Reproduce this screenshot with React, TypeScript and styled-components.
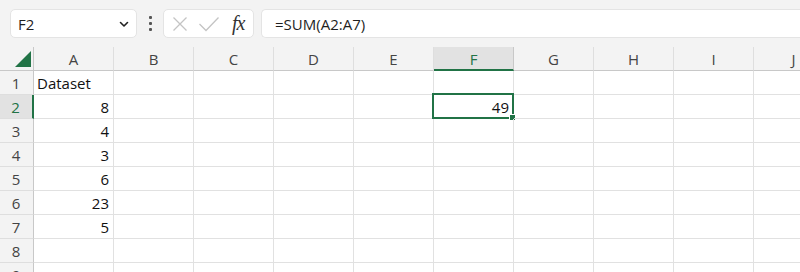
import React from "react";
import styled, { createGlobalStyle } from "styled-components";

const GlobalStyle = createGlobalStyle`
  html, body {
    margin: 0;
    padding: 0;
    background: #ffffff;
    overflow: hidden;
  }
  body {
    font-family: "Segoe UI", "Open Sans", "Noto Sans", sans-serif;
  }
`;

const GREEN = "#217346";
const COLS = ["A", "B", "C", "D", "E", "F", "G", "H", "I", "J"];
const ROWS = [1, 2, 3, 4, 5, 6, 7, 8, 9];
const DATA: Record<string, { text: string; align: "left" | "right" }> = {
  A1: { text: "Dataset", align: "left" },
  A2: { text: "8", align: "right" },
  A3: { text: "4", align: "right" },
  A4: { text: "3", align: "right" },
  A5: { text: "6", align: "right" },
  A6: { text: "23", align: "right" },
  A7: { text: "5", align: "right" },
  F2: { text: "49", align: "right" },
};
const ACTIVE_COL = "F";
const ACTIVE_ROW = 2;

const Page = styled.div`
  width: 800px;
  height: 272px;
  display: flex;
  flex-direction: column;
  background: #f3f3f3;
  overflow: hidden;
`;

const Toolbar = styled.div`
  height: 47px;
  flex: none;
  box-sizing: border-box;
  padding: 9px 0 9px 10px;
  display: flex;
  align-items: stretch;
`;

const Field = styled.div<{ $width?: number; $grow?: boolean }>`
  box-sizing: border-box;
  height: 29px;
  width: ${(p) => (p.$width ? `${p.$width}px` : "auto")};
  flex: ${(p) => (p.$grow ? "1" : "none")};
  background: #ffffff;
  border: 1px solid #e4e4e4;
  border-radius: 5px;
  display: flex;
  align-items: center;
  font-size: 15px;
  color: #1f1f1f;
`;

const NameBox = styled(Field)`
  padding: 0 6px 0 7px;
  justify-content: space-between;
`;

const FuncBox = styled(Field)`
  padding: 0 5px 0 8px;
  gap: 10px;
`;

const FormulaBox = styled(Field)`
  padding-left: 13px;
  border-radius: 5px 0 0 5px;
  border-right: none;
`;

const Kebab = styled.div`
  width: 26px;
  display: flex;
  flex-direction: column;
  align-items: center;
  justify-content: center;
  gap: 3px;
  span {
    width: 3px;
    height: 3px;
    border-radius: 1px;
    background: #555;
  }
`;

const Spacer = styled.div<{ $w: number }>`
  width: ${(p) => p.$w}px;
  flex: none;
`;

const Fx = styled.span`
  font-family: "Liberation Serif", "DejaVu Serif", serif;
  font-style: italic;
  font-size: 20px;
  color: #333;
  margin-left: 2px;
  letter-spacing: -1px;
`;

const Grid = styled.div`
  display: grid;
  grid-template-columns: 34px repeat(10, 80px);
  grid-template-rows: 24px repeat(9, 24px);
  background: #ffffff;
`;

const Corner = styled.div`
  background: #f3f3f3;
  border-right: 1px solid #c8c8c8;
  border-bottom: 1px solid #c8c8c8;
  box-sizing: border-box;
  display: flex;
  align-items: flex-end;
  justify-content: flex-end;
  padding: 0 2px 3px 0;
`;

const ColHead = styled.div<{ $active?: boolean }>`
  box-sizing: border-box;
  background: ${(p) => (p.$active ? "#e2e2e2" : "#f3f3f3")};
  border-right: 1px solid ${(p) => (p.$active ? "#c8c8c8" : "#dedede")};
  border-bottom: ${(p) => (p.$active ? `2px solid ${GREEN}` : "1px solid #c8c8c8")};
  display: flex;
  align-items: center;
  justify-content: center;
  font-size: 15px;
  color: ${(p) => (p.$active ? GREEN : "#444")};
  padding-top: ${(p) => (p.$active ? "1px" : "0")};
`;

const RowHead = styled.div<{ $active?: boolean }>`
  box-sizing: border-box;
  background: ${(p) => (p.$active ? "#e2e2e2" : "#f3f3f3")};
  border-right: ${(p) => (p.$active ? `2px solid ${GREEN}` : "1px solid #c8c8c8")};
  border-bottom: 1px solid #dedede;
  display: flex;
  align-items: center;
  justify-content: center;
  font-size: 15px;
  color: ${(p) => (p.$active ? GREEN : "#444")};
  padding: 1px 1px 0 0;
`;

const Cell = styled.div<{ $align: "left" | "right" }>`
  box-sizing: border-box;
  position: relative;
  border-right: 1px solid #e1e1e1;
  border-bottom: 1px solid #e1e1e1;
  display: flex;
  align-items: center;
  justify-content: ${(p) => (p.$align === "right" ? "flex-end" : "flex-start")};
  padding: 1px 4px 0 3px;
  font-size: 15px;
  color: #111;
  white-space: nowrap;
`;

const Selection = styled.div`
  position: absolute;
  left: -2px;
  top: -2px;
  right: -1px;
  bottom: -1px;
  border: 2px solid ${GREEN};
  pointer-events: none;
`;

const Handle = styled.div`
  position: absolute;
  right: -4px;
  bottom: -4px;
  width: 5px;
  height: 5px;
  background: ${GREEN};
  border: 1px solid #ffffff;
`;

function Chevron() {
  return (
    <svg width="12" height="12" viewBox="0 0 12 12">
      <path d="M2.5 4.5 L6 8 L9.5 4.5" fill="none" stroke="#222" strokeWidth="1.6" strokeLinecap="round" strokeLinejoin="round" />
    </svg>
  );
}

function Cross() {
  return (
    <svg width="16" height="16" viewBox="0 0 16 16">
      <path d="M1.5 1.5 L14.5 14.5 M14.5 1.5 L1.5 14.5" stroke="#c4c4c4" strokeWidth="1.3" fill="none" />
    </svg>
  );
}

function Check() {
  return (
    <svg width="22" height="16" viewBox="0 0 22 16">
      <path d="M1.5 8 L8 14.5 L20.5 1.5" stroke="#c4c4c4" strokeWidth="1.3" fill="none" />
    </svg>
  );
}

export default function App() {
  return (
    <>
      <GlobalStyle />
      <Page>
        <Toolbar>
          <NameBox $width={127}>
            <span>F2</span>
            <Chevron />
          </NameBox>
          <Kebab>
            <span />
            <span />
            <span />
          </Kebab>
          <FuncBox $width={91}>
            <Cross />
            <Check />
            <Fx>fx</Fx>
          </FuncBox>
          <Spacer $w={7} />
          <FormulaBox $grow>=SUM(A2:A7)</FormulaBox>
        </Toolbar>
        <Grid>
          <Corner>
            <svg width="16" height="16" viewBox="0 0 16 16">
              <path d="M16 0 L16 16 L0 16 Z" fill={GREEN} />
            </svg>
          </Corner>
          {COLS.map((c) => (
            <ColHead key={c} $active={c === ACTIVE_COL}>
              {c}
            </ColHead>
          ))}
          {ROWS.map((r) => (
            <React.Fragment key={r}>
              <RowHead $active={r === ACTIVE_ROW}>{r}</RowHead>
              {COLS.map((c) => {
                const ref = `${c}${r}`;
                const d = DATA[ref];
                const active = c === ACTIVE_COL && r === ACTIVE_ROW;
                return (
                  <Cell key={ref} $align={d ? d.align : "left"}>
                    {d ? d.text : null}
                    {active && (
                      <Selection>
                        <Handle />
                      </Selection>
                    )}
                  </Cell>
                );
              })}
            </React.Fragment>
          ))}
        </Grid>
      </Page>
    </>
  );
}
